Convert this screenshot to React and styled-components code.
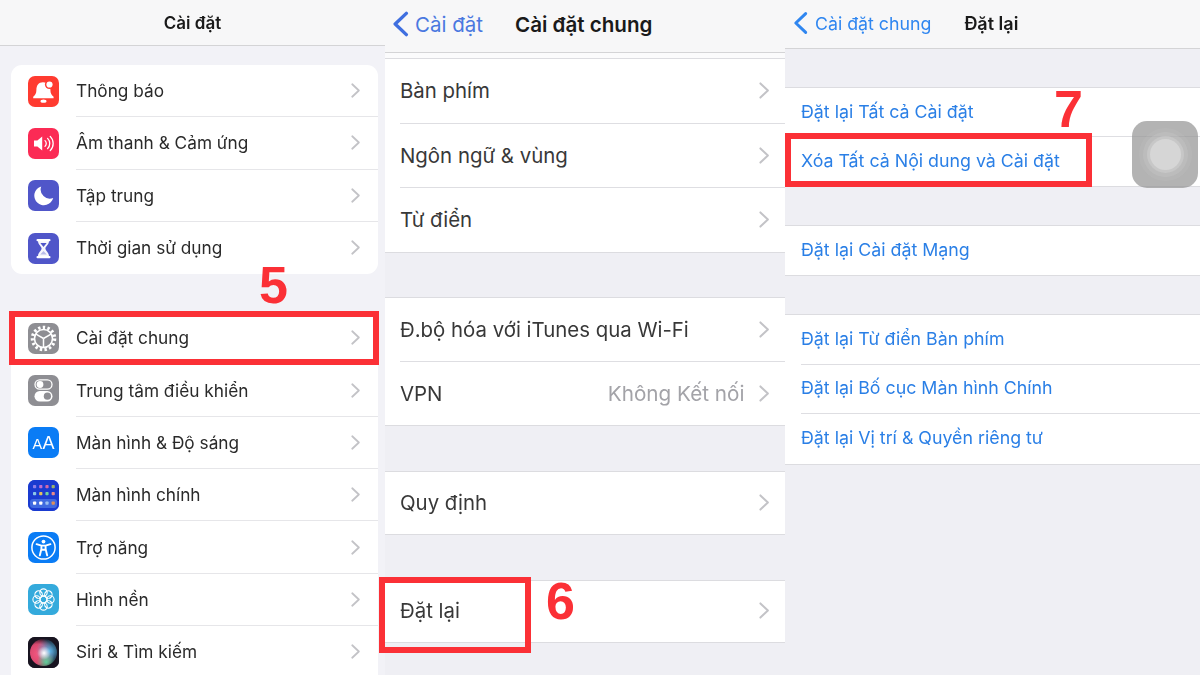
import React from "react";
import styled, { createGlobalStyle } from "styled-components";

const Global = createGlobalStyle`
    html, body { margin: 0; padding: 0; background: #fff; }
    body { font-family: Inter, "Noto Sans", sans-serif; }
`

const Page = styled.div`
    display: flex;
    width: 1200px;
    height: 675px;
    overflow: hidden;
`

const Panel = styled.section`
    position: relative;
    width: ${p => p.$width}px;
    height: 675px;
    background: ${p => p.$bg};
`

const Soft = styled.div`
    height: 100%;
    filter: blur(0.45px);
`

const Header = styled.header`
    display: flex;
    align-items: center;
    justify-content: ${p => p.$center ? "center" : "flex-start"};
    box-sizing: border-box;
    height: ${p => p.$h}px;
    padding-left: ${p => p.$pad || 0}px;
    padding-bottom: ${p => p.$lift || 0}px;
    background: #f7f7f8;
    border-bottom: 1px solid #d4d4d6;
`

const Title = styled.h1`
    margin: 0 0 0 ${p => p.$gap || 0}px;
    font-size: ${p => p.$size}px;
    font-weight: 600;
    color: #1a1a1a;
`

const BackLabel = styled.span`
    margin-left: ${p => p.$gap}px;
    font-size: ${p => p.$size}px;
    color: ${p => p.$color};
`

const Card = styled.div`
    margin: ${p => p.$top}px 7px 0 11px;
    background: #fff;
    border-radius: ${p => p.$flat ? "0" : "11px"};
`

const IconRow = styled.div`
    display: flex;
    align-items: center;
    height: 52.3px;
    padding-left: 17px;
`

const IconBox = styled.div`
    flex: none;
    width: 31px;
    height: 31px;
    border-radius: 7px;
    overflow: hidden;
    background: ${p => p.$bg};
    svg { display: block; }
`

const IconRowBody = styled.div`
    flex: 1;
    align-self: stretch;
    display: flex;
    align-items: center;
    justify-content: space-between;
    margin-left: 17px;
    padding-right: 18px;
    border-bottom: 1px solid ${p => p.$last ? "transparent" : "#e6e6e9"};
`

const Label = styled.span`
    font-size: ${p => p.$size}px;
    color: ${p => p.$color || "#2a2a2a"};
    padding-bottom: ${p => p.$lift || 0}px;
`

const Group = styled.div`
    margin-top: ${p => p.$top}px;
    background: #fff;
    border-top: 1px solid #dcdce0;
    border-bottom: 1px solid #dcdce0;
`

const Row = styled.div`
    box-sizing: border-box;
    height: ${p => p.$h}px;
    margin-left: ${p => p.$inset}px;
    padding-right: ${p => p.$inset}px;
    display: flex;
    align-items: center;
    justify-content: space-between;
    border-bottom: 1px solid ${p => p.$last ? "transparent" : "#dedee2"};
`

const RowRight = styled.div`
    display: flex;
    align-items: center;
    gap: 15px;
`

const Strip = styled.div`
    height: 5px;
    background: #fbfbfc;
`

const Frame = styled.div`
    position: absolute;
    box-sizing: border-box;
    left: ${p => p.$x}px;
    top: ${p => p.$y}px;
    width: ${p => p.$w}px;
    height: ${p => p.$h}px;
    border: 6px solid #fb3036;
`

const StepNumber = styled.div`
    position: absolute;
    left: ${p => p.$x}px;
    top: ${p => p.$y}px;
    font-family: "Liberation Sans", Arial, sans-serif;
    font-weight: 700;
    font-size: 52px;
    line-height: 52px;
    color: #fb3036;
`

const Touch = styled.div`
    position: absolute;
    left: 347px;
    top: 121px;
    width: 66px;
    height: 67px;
    display: flex;
    align-items: center;
    justify-content: center;
    border-radius: 15px;
    background: rgba(150, 150, 150, 0.72);
`

const TouchDot = styled.div`
    width: 31px;
    height: 31px;
    border-radius: 50%;
    background: #d6d6d6;
    box-shadow: 0 0 0 3px rgba(215,215,215,.4), 0 0 0 7px rgba(215,215,215,.2), 0 0 0 11px rgba(215,215,215,.1);
`

const Chevron = ({ size = 14, color = "#c3c3c7" }) =>
    <svg width={size * 0.62} height={size} viewBox="0 0 9 14.5" fill="none">
        <path d="M1.2 1.2 L7.6 7.25 L1.2 13.3" stroke={color} strokeWidth="1.7" strokeLinecap="round" strokeLinejoin="round"/>
    </svg>

const BackArrow = ({ w, h, color }) =>
    <svg width={w} height={h} viewBox="0 0 16 24" fill="none">
        <path d="M13.5 2 L3 12 L13.5 22" stroke={color} strokeWidth="3.2" strokeLinecap="round" strokeLinejoin="round"/>
    </svg>

const Svg = ({ children }) =>
    <svg width="31" height="31" viewBox="0 0 31 31">{children}</svg>

const BellIcon = () =>
    <Svg>
        <path d="M15 6.2 c-4.6 0 -6.6 3.4 -6.6 7.6 c0 3.6 -1.2 5.4 -3.2 7 v1.4 h20.4 v-1.4 c-2 -1.6 -3.2 -3.4 -3.2 -7 c0 -4.2 -2.8 -7.6 -7.4 -7.6z" fill="#fff"/>
        <ellipse cx="15.5" cy="25.2" rx="3" ry="1.6" fill="#fff"/>
        <circle cx="21.5" cy="8.5" r="4.6" fill="#ff3b30"/>
        <circle cx="21.5" cy="8.5" r="3.1" fill="#fff"/>
    </Svg>

const SoundIcon = () =>
    <Svg>
        <path d="M6 12.6 h3.4 l4.8 -4 v13.8 l-4.8 -4 h-3.4z" fill="#fff"/>
        <g fill="none" stroke="#fff" strokeWidth="1.3" strokeLinecap="round">
            <path d="M17 12.6 a4 4 0 0 1 0 5.8"/>
            <path d="M19.6 10.4 a7.2 7.2 0 0 1 0 10.2"/>
            <path d="M22.2 8.4 a10 10 0 0 1 0 14.2"/>
        </g>
    </Svg>

const MoonIcon = () =>
    <Svg>
        <path d="M13.2 6.4 a9.6 9.6 0 1 0 12 11.6 a9.2 9.2 0 0 1 -12 -11.6z" fill="#fff"/>
    </Svg>

const HourglassIcon = () =>
    <Svg>
        <g fill="#fff">
            <rect x="8.5" y="6" width="14" height="2.2" rx="1"/>
            <rect x="8.5" y="23" width="14" height="2.2" rx="1"/>
            <path d="M10 8 h11 c0 3.6 -3.6 5.4 -3.6 7.6 c0 2.2 3.6 4 3.6 7.6 h-11 c0 -3.6 3.6 -5.4 3.6 -7.6 c0 -2.2 -3.6 -4 -3.6 -7.6z" opacity=".95"/>
        </g>
        <path d="M12.4 10 h6.2 c-.8 1.6 -2.2 2.6 -3.1 4 c-.9 -1.4 -2.3 -2.4 -3.1 -4z" fill="#5056c9"/>
        <path d="M12.2 21.6 h6.6 l-3.3 -3.6z" fill="#b9bce8"/>
    </Svg>

const GearIcon = () =>
    <Svg>
        <circle cx="15.5" cy="15.5" r="11.2" fill="none" stroke="#fff" strokeWidth="3.2" strokeDasharray="2.4 2.3"/>
        <circle cx="15.5" cy="15.5" r="9" fill="none" stroke="#fff" strokeWidth="1.6"/>
        <g stroke="#fff" strokeWidth="1.5" fill="none">
            <path d="M15.5 15.5 L15.5 24"/>
            <path d="M15.5 15.5 L8 11.2"/>
            <path d="M15.5 15.5 L23 11.2"/>
        </g>
    </Svg>

const ToggleIcon = () =>
    <Svg>
        <rect x="7" y="4.8" width="17" height="9.4" rx="4.7" fill="none" stroke="#fff" strokeWidth="1.3"/>
        <circle cx="12" cy="9.5" r="3.4" fill="#fff"/>
        <rect x="6.5" y="16" width="18" height="10.4" rx="5.2" fill="#fff"/>
        <circle cx="19.4" cy="21.2" r="3.6" fill="#8e8e93"/>
    </Svg>

const AaText = styled.div`
    display: flex;
    align-items: baseline;
    justify-content: center;
    gap: 0.5px;
    height: 100%;
    line-height: 33px;
    color: #fff;
    font-family: "Liberation Sans", sans-serif;
    font-size: ${p => p.$big ? 18 : 14.5}px;
`

const AaIcon = () =>
    <AaText>A<AaText as="span" $big>A</AaText></AaText>

const dotColors = ["#8d7fe8", "#c06fd0", "#d56aa5", "#9bb36a", "#8bc6e8", "#e0c060", "#6fd0a0", "#e88a8a", "#fff", "#fff", "#9ac0f0", "#e0905a"]

const GridIcon = () =>
    <Svg>
        <rect x="0" y="0" width="31" height="31" fill="#1a3bd0"/>
        <rect x="2" y="19" width="27" height="9" rx="3" fill="#3f6ae0"/>
        {dotColors.map((c, i) =>
            <rect key={i} x={5 + (i % 4) * 6.2} y={[5, 12, 21.5][Math.floor(i / 4)]} width="3.2" height="3.2" rx=".8" fill={c}/>
        )}
    </Svg>

const AccessIcon = () =>
    <Svg>
        <circle cx="15.5" cy="15.5" r="11.6" fill="none" stroke="#fff" strokeWidth="1.5"/>
        <circle cx="15.5" cy="9.6" r="1.9" fill="#fff"/>
        <path d="M8.6 12.2 L13.4 13.6 V17 L11.8 23.4 M22.4 12.2 L17.6 13.6 V17 L19.2 23.4 M13.4 13.6 H17.6 V17.8 H13.4z" fill="none" stroke="#fff" strokeWidth="1.9" strokeLinecap="round" strokeLinejoin="round"/>
    </Svg>

const petals = [0, 45, 90, 135, 180, 225, 270, 315]

const FlowerIcon = () =>
    <Svg>
        <g fill="none" stroke="#fff" strokeWidth="1.1">
            {petals.map(a =>
                <circle key={a} cx="15.5" cy="8.6" r="3.7" transform={`rotate(${a} 15.5 15.5)`}/>
            )}
            <circle cx="15.5" cy="15.5" r="3.6"/>
        </g>
    </Svg>

const SiriIcon = () =>
    <Svg>
        <defs>
            <radialGradient id="siriPink" cx=".3" cy=".55" r=".6">
                <stop offset="0" stopColor="#f4577f"/>
                <stop offset=".6" stopColor="#d8486f"/>
                <stop offset="1" stopColor="#d8486f" stopOpacity="0"/>
            </radialGradient>
            <radialGradient id="siriBlue" cx=".72" cy=".45" r=".5">
                <stop offset="0" stopColor="#54b6e8"/>
                <stop offset="1" stopColor="#54b6e8" stopOpacity="0"/>
            </radialGradient>
            <radialGradient id="siriWhite" cx=".52" cy=".52" r=".25">
                <stop offset="0" stopColor="#fff"/>
                <stop offset="1" stopColor="#fff" stopOpacity="0"/>
            </radialGradient>
            <radialGradient id="siriGreen" cx=".6" cy=".85" r=".35">
                <stop offset="0" stopColor="#5fcf9a"/>
                <stop offset="1" stopColor="#5fcf9a" stopOpacity="0"/>
            </radialGradient>
        </defs>
        <rect width="31" height="31" fill="#181420"/>
        <circle cx="15.5" cy="15.5" r="13.5" fill="url(#siriPink)"/>
        <circle cx="15.5" cy="15.5" r="13.5" fill="url(#siriBlue)"/>
        <circle cx="15.5" cy="15.5" r="13.5" fill="url(#siriGreen)"/>
        <circle cx="15.5" cy="15.5" r="13.5" fill="url(#siriWhite)"/>
    </Svg>

const firstCard = [
    { label: "Thông báo", bg: "#ff3b30", Icon: BellIcon },
    { label: "Âm thanh & Cảm ứng", bg: "#fb2b55", Icon: SoundIcon },
    { label: "Tập trung", bg: "#5056c9", Icon: MoonIcon },
    { label: "Thời gian sử dụng", bg: "#5056c9", Icon: HourglassIcon },
]

const secondCard = [
    { label: "Cài đặt chung", bg: "#8e8e93", Icon: GearIcon },
    { label: "Trung tâm điều khiển", bg: "#8e8e93", Icon: ToggleIcon },
    { label: "Màn hình & Độ sáng", bg: "#0a7cf5", Icon: AaIcon },
    { label: "Màn hình chính", bg: "#1a3bd0", Icon: GridIcon },
    { label: "Trợ năng", bg: "#0a7cf5", Icon: AccessIcon },
    { label: "Hình nền", bg: "#34aadc", Icon: FlowerIcon },
    { label: "Siri & Tìm kiếm", bg: "#181420", Icon: SiriIcon },
]

const ListIconRows = ({ items }) =>
    items.map((item, i) =>
        <IconRow key={i}>
            <IconBox $bg={item.bg}><item.Icon/></IconBox>
            <IconRowBody $last={i === items.length - 1}>
                <Label $size={17.25}>{item.label}</Label>
                <Chevron size={15}/>
            </IconRowBody>
        </IconRow>
    )

const middleGroups = [
    { top: 0, rows: [{ label: "Bàn phím", h: 64.5 }, { label: "Ngôn ngữ & vùng", h: 64.5 }, { label: "Từ điển", h: 63.5 }] },
    { top: 44.5, rows: [{ label: "Đ.bộ hóa với iTunes qua Wi-Fi", h: 64 }, { label: "VPN", value: "Không Kết nối", h: 63 }] },
    { top: 45, rows: [{ label: "Quy định", h: 61.5 }] },
    { top: 45, rows: [{ label: "Đặt lại", h: 61.5 }] },
]

const rightGroups = [
    { top: 38, h: 49, rows: ["Đặt lại Tất cả Cài đặt", "Xóa Tất cả Nội dung và Cài đặt"] },
    { top: 38, h: 49, rows: ["Đặt lại Cài đặt Mạng"] },
    { top: 38, h: 49.5, rows: ["Đặt lại Từ điển Bàn phím", "Đặt lại Bố cục Màn hình Chính", "Đặt lại Vị trí & Quyền riêng tư"] },
]

const App = () =>
    <Page>
        <Global/>
        <Panel $width={385} $bg="#f2f2f7">
            <Soft>
                <Header $h={46} $center><Title $size={17}>Cài đặt</Title></Header>
                <Card $top={19}><ListIconRows items={firstCard}/></Card>
                <Card $top={38} $flat><ListIconRows items={secondCard}/></Card>
            </Soft>
            <StepNumber $x={259} $y={259}>5</StepNumber>
            <Frame $x={9} $y={311} $w={370} $h={54}/>
        </Panel>

        <Panel $width={400} $bg="#efeff4">
            <Soft>
                <Header $h={53} $pad={7} $lift={4}>
                    <BackArrow w={17} h={26} color="#3f6fe0"/>
                    <BackLabel $gap={6} $size={20.5} $color="#4a78e0">Cài đặt</BackLabel>
                    <Title $size={20.6} $gap={32}>Cài đặt chung</Title>
                </Header>
                <Strip/>
                {middleGroups.map((group, g) =>
                    <Group key={g} $top={group.top}>
                        {group.rows.map((row, i) =>
                            <Row key={i} $h={row.h} $inset={15} $last={i === group.rows.length - 1}>
                                <Label $size={20.4} $color="#383838">{row.label}</Label>
                                <RowRight>
                                    {row.value && <Label $size={20.7} $color="#a3a3a8">{row.value}</Label>}
                                    <Chevron size={17}/>
                                </RowRight>
                            </Row>
                        )}
                    </Group>
                )}
            </Soft>
            <Frame $x={-6} $y={577} $w={152} $h={76}/>
            <StepNumber $x={161} $y={575}>6</StepNumber>
        </Panel>

        <Panel $width={415} $bg="#efeff4">
            <Soft>
                <Header $h={49} $pad={8} $lift={2}>
                    <BackArrow w={15} h={24} color="#2f86f0"/>
                    <BackLabel $gap={7} $size={17.75} $color="#2f86f0">Cài đặt chung</BackLabel>
                    <Title $size={18} $gap={33}>Đặt lại</Title>
                </Header>
                {rightGroups.map((group, g) =>
                    <Group key={g} $top={group.top}>
                        {group.rows.map((row, i) =>
                            <Row key={i} $h={group.h} $inset={16} $last={i === group.rows.length - 1}>
                                <Label $size={17.8} $color="#2a7fe6" $lift={2}>{row}</Label>
                            </Row>
                        )}
                    </Group>
                )}
            </Soft>
            <StepNumber $x={269} $y={83}>7</StepNumber>
            <Frame $x={0} $y={133} $w={307} $h={54}/>
            <Touch><TouchDot/></Touch>
        </Panel>
    </Page>

export default App
